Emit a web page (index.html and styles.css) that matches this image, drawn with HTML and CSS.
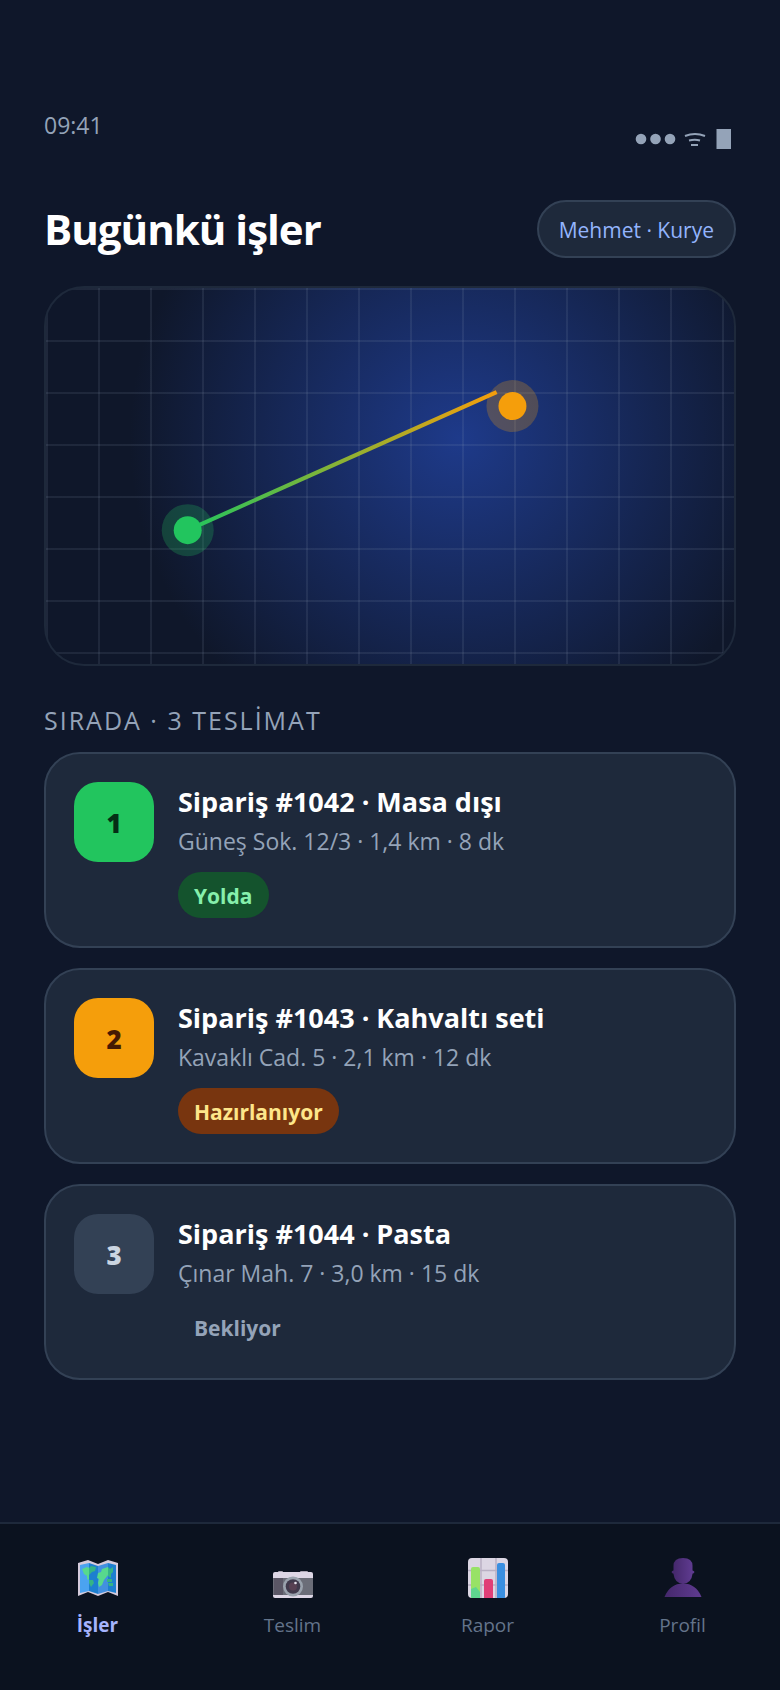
FILE: index.html
```html
<!DOCTYPE html>
<html lang="tr">
<head>
	<meta charset="UTF-8">
	<meta name="viewport" content="width=device-width, initial-scale=1.0">
	<link rel="stylesheet" href="styles.css">
	<title>Bugünkü işler</title>
</head>
<body>

<div class="phone">

	<div class="status">
		<span class="time">09:41</span>
		<svg class="status-icons" width="104" height="24" viewBox="0 0 104 24" fill="#94a3b8">
			<circle cx="9" cy="12" r="5.3"/>
			<circle cx="23.500" cy="12" r="5.3"/>
			<circle cx="38" cy="12" r="5.3"/>
			<g fill="none" stroke="#94a3b8" stroke-width="2">
				<path d="M53 9q10-4 20 0"/>
				<path d="M57 13.500q6-1.500 11 0"/>
				<path d="M59 18h7"/>
			</g>
			<rect x="84.500" y="2" width="14.500" height="20"/>
		</svg>
	</div>

	<header class="header">
		<h1>Bugünkü işler</h1>
		<button class="user" type="button">Mehmet · Kurye</button>
	</header>

	<div class="map">
		<svg class="route" width="100%" height="100%">
			<defs>
				<linearGradient id="route-color">
					<stop offset="0" stop-color="#22c55e"/>
					<stop offset="1" stop-color="#f59e0b"/>
				</linearGradient>
			</defs>
			<circle cx="20.600%" cy="64.400%" r="26" fill="#22c55e" fill-opacity=".25"/>
			<circle cx="67.800%" cy="31.400%" r="26" fill="#f59e0b" fill-opacity=".25"/>
			<line x1="20.600%" y1="64.400%" x2="65.500%" y2="27.700%" stroke="url(#route-color)" stroke-width="4"/>
			<circle cx="20.600%" cy="64.400%" r="14" fill="#22c55e"/>
			<circle cx="67.800%" cy="31.400%" r="14" fill="#f59e0b"/>
		</svg>
	</div>

	<h2 class="label">SIRADA · 3 TESLİMAT</h2>

	<ul class="jobs">

		<li class="job">
			<span class="num green">1</span>
			<div class="info">
				<h3>Sipariş #1042 · Masa dışı</h3>
				<p>Güneş Sok. 12/3 · 1,4 km · 8 dk</p>
				<span class="badge on-way">Yolda</span>
			</div>
		</li>

		<li class="job">
			<span class="num orange">2</span>
			<div class="info">
				<h3>Sipariş #1043 · Kahvaltı seti</h3>
				<p>Kavaklı Cad. 5 · 2,1 km · 12 dk</p>
				<span class="badge preparing">Hazırlanıyor</span>
			</div>
		</li>

		<li class="job">
			<span class="num gray">3</span>
			<div class="info">
				<h3>Sipariş #1044 · Pasta</h3>
				<p>Çınar Mah. 7 · 3,0 km · 15 dk</p>
				<span class="badge">Bekliyor</span>
			</div>
		</li>

	</ul><!-- end of jobs -->

</div><!-- end of phone -->

<nav class="tabs">
	<a class="tab active" href="#isler">
		<svg width="40" height="40" viewBox="0 0 40 40">
			<path d="M0 5l10-3 10 4 10-4 10 3v33l-10-4-10 4-10-4-10 4z" fill="#d5cbdc"/>
			<path d="M2 7l9-2v28l-9 2z" fill="#4ba3f0"/>
			<path d="M11 5l9 3v28l-9-3z" fill="#1d7fd0"/>
			<path d="M20 8l10-3v28l-10 3z" fill="#4290e0"/>
			<path d="M30 5l8 2v28l-8-2z" fill="#1d7fd0"/>
			<path d="M4 11l5-2 2 1v12l-2-1v-3l-3-2zM19 20l1-5 3-1 1-3 6-2v8l-4 5-2 5-3 2-1-4 1-4z" fill="#57d98d"/>
			<path d="M11 10l2-2 5 1-1 4-3 1-3 3zM11 22l4 0 1 3-3 4-2-4zM30 9l2 2 3-2 0 5-2 2 0 4-3-2zM29 21h5v3h-5zM30 25h5v3h-4z" fill="#35b486"/>
		</svg>
		<span>İşler</span>
	</a>
	<a class="tab" href="#teslim">
		<svg width="40" height="40" viewBox="0 0 40 40">
			<path d="M5 14q0-1 1-1h3q1 0 1 1v1H5zM27 14q0-1 1-1h6q1 0 1 1v1h-8z" fill="#a9a3b2"/>
			<rect y="14" width="40" height="26" rx="2" fill="#ddd6e5"/>
			<rect y="20" width="40" height="17" fill="#6b6d78"/>
			<path d="M1 20h9v17H1z" fill="#5a5665"/>
			<circle cx="20" cy="28.500" r="10" fill="#9aa2ad"/>
			<circle cx="20" cy="28.500" r="7.300" fill="#40394b"/>
			<circle cx="20" cy="28.500" r="4" fill="#584052"/>
			<circle cx="22.500" cy="25" r="1.300" fill="#e5e0ea"/>
		</svg>
		<span>Teslim</span>
	</a>
	<a class="tab" href="#rapor">
		<svg width="40" height="40" viewBox="0 0 40 40">
			<rect width="40" height="40" rx="4" fill="#dcd6e3"/>
			<path d="M0 12.500h40M0 27h40M13 0v40M28 0v40" stroke="#b9b0c4" stroke-width="1.500"/>
			<path d="M3 11q0-2 2-2h5q2 0 2 2v29H4q-1 0-1-1z" fill="#98e266"/>
			<path d="M3 31l5-2 4 5v6H4q-1 0-1-1z" fill="#5fd68f"/>
			<path d="M16 40V23q0-2 2-2h5q2 0 2 2v17z" fill="#e03f77"/>
			<path d="M29 40V7q0-2 2-2h4q2 0 2 2v33z" fill="#3a8fe0"/>
		</svg>
		<span>Rapor</span>
	</a>
	<a class="tab" href="#profil">
		<svg width="40" height="40" viewBox="0 0 40 40">
			<defs>
				<linearGradient id="person">
					<stop offset="0" stop-color="#45286c"/>
					<stop offset="1" stop-color="#5f3b90"/>
				</linearGradient>
			</defs>
			<g fill="url(#person)">
				<ellipse cx="20" cy="14" rx="11.500" ry="3"/>
				<path d="M10.500 8q0-8 9.500-8t9.500 8v8q-1 9-9.500 10-8.500-1-9.500-10z"/>
				<path d="M1.500 39Q7 25.500 20 25.500T38.500 39z"/>
			</g>
		</svg>
		<span>Profil</span>
	</a>
</nav>

</body>
</html>
```
FILE: styles.css
```css
* {
	box-sizing: border-box;
	margin: 0;
	padding: 0;
}

body {
	display: flex;
	flex-direction: column;
	min-height: 100vh;
	background-color: #0f172a;
	color: #ffffff;
	font-family: "Open Sans", "Noto Sans", sans-serif;
}

.phone {
	flex: 1;
	padding: 108px 44px 40px;
}

/* top bar */
.status {
	display: flex;
	justify-content: space-between;
	min-height: 43px;
	color: #94a3b8;
	font-size: 23px;
	line-height: 35px;
}
	.status-icons{
		align-self: flex-end;
	}

.header {
	display: flex;
	justify-content: space-between;
	align-items: center;
	margin: 49px 0 28px;
}
	.header h1{
		font-size: 42px;
		line-height: 56px;
		letter-spacing: -1px;
	}

.user {
	height: 58px;
	padding: 2px 20px 0;
	border: 2px solid #334155;
	border-radius: 29px;
	background-color: #1e293b;
	color: #93b4fd;
	font-family: inherit;
	font-size: 21px;
	cursor: pointer;
}

/* map with route */
.map {
	height: 380px;
	border: 2px solid #1e293b;
	border-radius: 40px;
	overflow: hidden;
	background:
		linear-gradient(rgba(148, 163, 184, .12) 2px, transparent 2px) 0 0 / 52px 52px,
		linear-gradient(90deg, rgba(148, 163, 184, .12) 2px, transparent 2px) 0 0 / 52px 52px,
		radial-gradient(circle at 60% 40%, #1e3a8a, #0f172a 70%);
}

.route {
	display: block;
}

.label {
	margin: 36px 0 14px;
	color: #94a3b8;
	font-size: 25px;
	font-weight: 400;
	line-height: 36px;
	letter-spacing: 2px;
}

/* deliveries */
.jobs {
	display: grid;
	gap: 20px;
	list-style-type: none;
}

.job {
	display: flex;
	gap: 24px;
	padding: 28px;
	border: 2px solid #334155;
	border-radius: 36px;
	background-color: #1e293b;
}

.num {
	width: 80px;
	height: 80px;
	border-radius: 24px;
	font-size: 26px;
	font-weight: 800;
	line-height: 82px;
	text-align: center;
}
	.green{
		background-color: #22c55e;
		color: #052e16;
	}
	.orange{
		background-color: #f59e0b;
		color: #451a03;
	}
	.gray{
		background-color: #334155;
		color: #cbd5e1;
	}

.info h3 {
	font-size: 27px;
	line-height: 40px;
}

.info p {
	margin-bottom: 12px;
	color: #94a3b8;
	font-size: 23px;
	line-height: 38px;
}

.badge {
	display: inline-block;
	padding: 2px 16px 0;
	border-radius: 23px;
	color: #94a3b8;
	font-size: 21px;
	font-weight: 700;
	line-height: 44px;
}
	.on-way{
		background-color: #14532d;
		color: #86efac;
	}
	.preparing{
		background-color: #78350f;
		color: #fde68a;
	}

/* bottom menu */
.tabs {
	display: grid;
	grid-template-columns: repeat(4, 1fr);
	padding: 34px 0 50px;
	border-top: 2px solid #1e293b;
	background-color: #0b121f;
}

.tab {
	display: flex;
	flex-direction: column;
	align-items: center;
	gap: 12px;
	color: #64748b;
	font-size: 19px;
	line-height: 30px;
	text-decoration: none;
}
	.active{
		color: #a5b4fc;
		font-weight: 700;
	}
```
